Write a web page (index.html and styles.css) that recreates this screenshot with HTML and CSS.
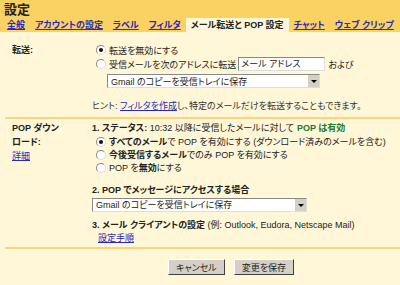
FILE: index.html
```html
<!DOCTYPE html>
<html>
<head>
    <title>設定</title>
    <link rel="stylesheet" href="styles.css">
</head>
<body>
    <div class="header">
        <div class="title">設定</div>
        <div class="tabs">
            <a class="tab" href="#">全般</a>
            <a class="tab" href="#">アカウントの設定</a>
            <a class="tab" href="#">ラベル</a>
            <a class="tab" href="#">フィルタ</a>
            <span class="tab active">メール転送と POP 設定</span>
            <a class="tab" href="#">チャット</a>
            <a class="tab" href="#">ウェブ クリップ</a>
        </div>
    </div>

    <div class="content">
        <div class="section forward">
            <div class="label"><b>転送:</b></div>
            <div class="value">
                <div class="row"><span class="radio checked"></span>転送を無効にする</div>
                <div class="row"><span class="radio"></span>受信メールを次のアドレスに転送<span class="input">メール アドレス</span>および</div>
                <div class="row indent"><span class="select wide">Gmail のコピーを受信トレイに保存<span class="arrow"></span></span></div>
                <div class="hint">ヒント: <a href="#">フィルタを作成</a>し、特定のメールだけを転送することもできます。</div>
            </div>
        </div>

        <div class="rule"></div>

        <div class="section pop">
            <div class="label"><b>POP ダウンロード:</b><br><a href="#">詳細</a></div>
            <div class="value">
                <div class="row"><b>1. ステータス:</b>&nbsp;10:32 以降に受信したメールに対して <b class="ok">POP は有効</b></div>
                <div class="row opt"><span class="radio checked"></span><b>すべてのメール</b>で POP を有効にする (ダウンロード済みのメールを含む)</div>
                <div class="row opt"><span class="radio"></span><b>今後受信するメール</b>でのみ POP を有効にする</div>
                <div class="row opt"><span class="radio"></span>POP を<b>無効</b>にする</div>
                <div class="row step"><b>2. POP でメッセージにアクセスする場合</b></div>
                <div class="row"><span class="select">Gmail のコピーを受信トレイに保存<span class="arrow"></span></span></div>
                <div class="row step last"><b>3. メール クライアントの設定</b>&nbsp;(例: Outlook, Eudora, Netscape Mail)</div>
                <div class="row link"><a href="#">設定手順</a></div>
            </div>
        </div>

        <div class="rule bottom"></div>

        <div class="actions">
            <button>キャンセル</button>
            <button>変更を保存</button>
        </div>
    </div>
</body>
</html>
```

FILE: styles.css
```css
body {
    margin: 0;
    font-family: "Liberation Sans", "Noto Sans CJK JP", sans-serif;
    font-size: 9px;
    font-feature-settings: "palt";
    color: #222222;
    background-color: #fff7d7;
}

a {
    color: #2a2ab8;
}

.header {
    background-color: #fad163;
    padding-top: 2px;
}

.title {
    font-size: 13px;
    font-weight: bold;
    line-height: 16px;
    padding-left: 4px;
}

.tabs {
    display: flex;
    height: 14px;
    padding-left: 2px;
    white-space: nowrap;
    overflow: hidden;
}

.tab {
    font-weight: bold;
    line-height: 14px;
    padding: 0 5px;
}

.tab.active {
    background-color: #fff7d7;
    color: #222222;
}

.content {
    padding-top: 11px;
}

.section {
    display: flex;
}

.label {
    flex-shrink: 0;
    width: 50px;
    padding-left: 12px;
    padding-right: 30px;
    line-height: 14px;
}

.value {
    flex: 1;
    min-width: 0;
}

.row {
    display: flex;
    align-items: center;
    height: 14px;
    white-space: nowrap;
}

.forward .value {
    padding-left: 4px;
}

.indent {
    padding-left: 11px;
    margin-top: 3px;
}

.radio {
    flex-shrink: 0;
    width: 8px;
    height: 8px;
    border: 1px solid #8a8a8a;
    border-right-color: #dddddd;
    border-bottom-color: #dddddd;
    border-radius: 50%;
    background-color: #ffffff;
    margin-right: 3px;
    position: relative;
}

.radio.checked::after {
    content: "";
    position: absolute;
    left: 2px;
    top: 2px;
    width: 4px;
    height: 4px;
    border-radius: 50%;
    background-color: #111111;
}

.input {
    flex-shrink: 0;
    width: 83px;
    height: 12px;
    line-height: 12px;
    padding-left: 2px;
    margin: 0 3px 0 2px;
    background-color: #ffffff;
    border: 1px solid;
    border-color: #888888 #dddddd #dddddd #888888;
}

.select {
    display: flex;
    align-items: center;
    justify-content: space-between;
    width: 210px;
    height: 12px;
    padding-left: 3px;
    background-color: #ffffff;
    border: 1px solid #888888;
    border-right-color: #dddddd;
    border-bottom-color: #dddddd;
}

.select.wide {
    width: 208px;
}

.arrow {
    width: 11px;
    height: 12px;
    background-color: #d4d0c8;
    border-left: 1px solid #ffffff;
    position: relative;
}

.arrow::after {
    content: "";
    position: absolute;
    left: 3px;
    top: 5px;
    border-left: 3px solid transparent;
    border-right: 3px solid transparent;
    border-top: 3px solid #000000;
}

.hint {
    margin-top: 11px;
    margin-left: -4px;
    line-height: 14px;
    color: #333333;
    white-space: nowrap;
}

.rule {
    height: 2px;
    margin: 4px 0 2px 5px;
    background-color: #fad57a;
}

.rule.bottom {
    margin-top: 3px;
    margin-bottom: 10px;
}

.pop .value {
    line-height: 14px;
}

.opt {
    height: 13px;
    padding-left: 4px;
}

.ok {
    color: #1c7a2c;
    margin-left: 3px;
}

.step {
    margin-top: 9px;
}

.step.last {
    margin-top: 7px;
}

.pop .select {
    margin-top: 1px;
}

.link {
    height: 12px;
    padding-left: 6px;
}

.actions {
    display: flex;
    justify-content: center;
    gap: 9px;
    padding-left: 62px;
}

button {
    font-family: inherit;
    font-size: 9px;
    font-feature-settings: "palt";
    height: 16px;
    padding: 0 7px;
    background-color: #d4d0c8;
    border: 1px solid;
    border-color: #ffffff #404040 #404040 #ffffff;
    color: #222222;
}
```
